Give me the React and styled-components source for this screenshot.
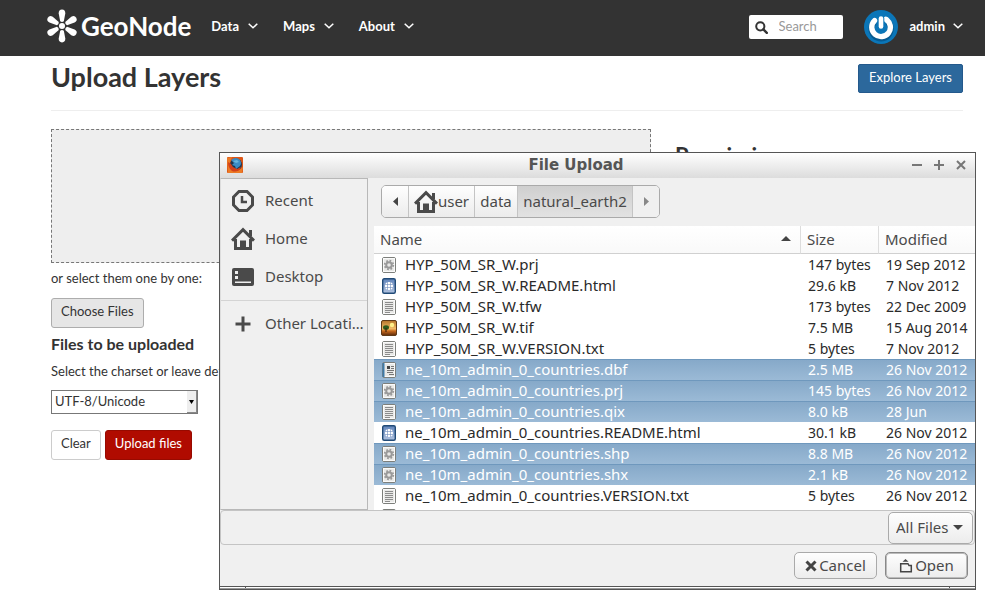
import React, { useState } from 'react'
import styled, { createGlobalStyle } from 'styled-components'


const FILES = [
  { name: 'HYP_50M_SR_W.prj', icon: 'gear', size: '147 bytes', modified: '19 Sep 2012' },
  { name: 'HYP_50M_SR_W.README.html', icon: 'web', size: '29.6 kB', modified: '7 Nov 2012' },
  { name: 'HYP_50M_SR_W.tfw', icon: 'text', size: '173 bytes', modified: '22 Dec 2009' },
  { name: 'HYP_50M_SR_W.tif', icon: 'image', size: '7.5 MB', modified: '15 Aug 2014' },
  { name: 'HYP_50M_SR_W.VERSION.txt', icon: 'text', size: '5 bytes', modified: '7 Nov 2012' },
  { name: 'ne_10m_admin_0_countries.dbf', icon: 'book', size: '2.5 MB', modified: '26 Nov 2012', picked: true },
  { name: 'ne_10m_admin_0_countries.prj', icon: 'gear', size: '145 bytes', modified: '26 Nov 2012', picked: true },
  { name: 'ne_10m_admin_0_countries.qix', icon: 'text', size: '8.0 kB', modified: '28 Jun', picked: true },
  { name: 'ne_10m_admin_0_countries.README.html', icon: 'web', size: '30.1 kB', modified: '26 Nov 2012' },
  { name: 'ne_10m_admin_0_countries.shp', icon: 'gear', size: '8.8 MB', modified: '26 Nov 2012', picked: true },
  { name: 'ne_10m_admin_0_countries.shx', icon: 'gear', size: '2.1 kB', modified: '26 Nov 2012', picked: true },
  { name: 'ne_10m_admin_0_countries.VERSION.txt', icon: 'text', size: '5 bytes', modified: '26 Nov 2012' },
  { name: '', icon: 'book', size: '', modified: '' },
]

/* icons */

const Logo = () => (
  <svg width="32" height="34" viewBox="-16 -17 32 34" fill="#fff">
    <circle r="3" />
    {[0, 60, 120, 180, 240, 300].map((a) => (
      <path key={a} transform={`rotate(${a})`} d="M-1.8 -4.8 L-3.3 -12.6 Q-3.4 -16.4 0 -16.4 Q3.4 -16.4 3.3 -12.6 L1.8 -4.8 Q0 -3.4 -1.8 -4.8 Z" />
    ))}
  </svg>
)

const Chevron = () => (
  <svg width="10" height="6" viewBox="0 0 10 6" fill="none" stroke="#fff" strokeWidth="1.5">
    <path d="M0.7 0.7 L5 4.8 L9.3 0.7" />
  </svg>
)

const SearchIcon = () => (
  <svg width="13" height="13" viewBox="0 0 13 13" fill="none" stroke="#333">
    <circle cx="5.3" cy="5.3" r="4.1" strokeWidth="2" />
    <path d="M8.4 8.4 L11.8 11.8" strokeWidth="2.4" strokeLinecap="round" />
  </svg>
)

const Avatar = () => (
  <svg width="34" height="34" viewBox="0 0 34 34" fill="none">
    <circle cx="17" cy="17" r="17" fill="#0b76b8" />
    <path d="M10.6 10.8 A9.6 9.6 0 1 0 23.6 10.8" stroke="#075a90" strokeWidth="6" transform="translate(0 1)" />
    <path d="M10.6 10.6 A9.3 9.3 0 1 0 22 9.4" stroke="#fff" strokeWidth="5.4" strokeLinecap="round" />
    <path d="M17 8 V17.5" stroke="#0b76b8" strokeWidth="6.6" />
    <path d="M17 8.5 V16.5" stroke="#fff" strokeWidth="4.6" strokeLinecap="round" />
  </svg>
)

const Firefox = () => (
  <svg width="16" height="16" viewBox="0 0 16 16">
    <rect width="16" height="16" rx="1" fill="#dc5516" />
    <path d="M0 1 L5 0 L2 8 L5 13 L11 14 L16 10 L15 16 L1 16 Z" fill="#ec7a25" />
    <circle cx="9" cy="7.5" r="6" fill="#20364f" />
    <path d="M4 3 Q9 -1 13 3 Q15 6 13 9 L9 12 L8 9 L5 8 L7 6 Z" fill="#3b8cc4" />
    <path d="M1 5 L4 7 L6 10 L10 12 L14 10 Q11 16 5 14 Q1 11 1 5 Z" fill="#d2401a" />
    <path d="M6 4 L10 3 L12 5 L9 6 Z" fill="#69b5dd" />
  </svg>
)

const HomeIcon = () => (
  <svg width="24" height="24" viewBox="0 0 24 24" fill="none" stroke="#4a4a4a">
    <path d="M1 13.600 L12 2.600 L23 13.600" strokeWidth="3" />
    <path d="M19.500 3 V9" strokeWidth="3" />
    <path d="M4.500 12 V21.500 H19.500 V12" strokeWidth="3" />
    <path d="M12 13.500 V22" strokeWidth="6" />
  </svg>
)

const RecentIcon = () => (
  <svg width="24" height="24" viewBox="0 0 24 24" fill="none" stroke="#4a4a4a" strokeWidth="3">
    <path d="M8 2.500 H16 L21.500 8 V16 L16 21.500 H8 L2.500 16 V8 Z" />
    <path d="M11 7 V13 H16" strokeWidth="2.500" />
  </svg>
)

const DesktopIcon = () => (
  <svg width="24" height="24" viewBox="0 0 24 24">
    <rect x="1" y="3" width="22" height="18" rx="2" fill="#4a4a4a" />
    <path d="M4 6 H7 V9 H4 Z M4 11 H7 V14 H4 Z M4 16.500 H20 V18 H4 Z" fill="#f0f0f0" />
  </svg>
)

const PlusIcon = () => (
  <svg width="24" height="24" viewBox="0 0 24 24" stroke="#4a4a4a" strokeWidth="3">
    <path d="M12 4.500 V19.500 M4.500 12 H19.500" />
  </svg>
)

const Triangle = ({ points, w, h, color = '#444' }) => (
  <svg width={w} height={h} viewBox={`0 0 ${w} ${h}`}>
    <polygon points={points} fill={color} />
  </svg>
)

const FileIcon = ({ kind }) => {
  if (kind === 'image') {
    return (
      <svg width="16" height="16" viewBox="0 0 16 16">
        <defs>
          <linearGradient id="sunset" x1="0" y1="0" x2="0" y2="1">
            <stop offset="0" stopColor="#b4742b" />
            <stop offset="0.55" stopColor="#f3bd68" />
            <stop offset="0.7" stopColor="#c86a1d" />
            <stop offset="1" stopColor="#5a2a0c" />
          </linearGradient>
        </defs>
        <rect x="0.5" y="0.5" width="15" height="15" rx="1.5" fill="url(#sunset)" stroke="#5f3a17" />
        <circle cx="11" cy="5" r="2.2" fill="#fff08a" />
        <ellipse cx="5" cy="7.5" rx="3" ry="2.3" fill="#2f5a1c" />
        <path d="M5 8 V12" stroke="#3c2410" strokeWidth="1.2" />
      </svg>
    )
  }
  if (kind === 'web') {
    return (
      <svg width="16" height="16" viewBox="0 0 16 16" fill="none">
        <defs>
          <linearGradient id="webpage" x1="0" y1="0" x2="0" y2="1">
            <stop offset="0" stopColor="#5f83ba" />
            <stop offset="1" stopColor="#b3c4e0" />
          </linearGradient>
        </defs>
        <rect x="1.700" y="0.700" width="12.600" height="14.600" rx="1.500" fill="url(#webpage)" stroke="#204a77" strokeWidth="1.400" />
        <circle cx="8" cy="8" r="4" fill="#fff" />
        <path d="M4 6.500 H12 M4 9.500 H12 M6.500 4 V12 M9.500 4 V12" stroke="#6e8cbc" strokeWidth="0.6" />
      </svg>
    )
  }
  return (
    <svg width="16" height="16" viewBox="0 0 16 16" fill="none">
      <rect x="1.500" y="0.500" width="13" height="15" rx="1.500" fill="#e9e9e7" stroke="#7d7f7b" />
      <rect x="2.500" y="1.500" width="11" height="13" stroke="#fafafa" />
      {kind === 'text' && <path d="M4 3.500 H12 M4 5.500 H12 M4 7.500 H12 M4 9.500 H12 M4 11.500 H12 M4 13.500 H9" stroke="#8c8c8c" />}
      {kind === 'gear' && (
        <>
          <circle cx="8" cy="8" r="2.800" stroke="#999" strokeWidth="2" />
          <circle cx="8" cy="8" r="4.300" stroke="#999" strokeWidth="1.800" strokeDasharray="1.690 1.690" />
        </>
      )}
      {kind === 'book' && (
        <>
          <path d="M2.500 1 V15" stroke="#3f7aa8" strokeWidth="2" />
          <path d="M6 4 H9 V7 H6 Z" fill="#444" />
          <path d="M10 4.500 H13 M10 6.500 H13 M6 8.500 H13 M6 10.500 H12 M8 12.500 H13" stroke="#777" />
        </>
      )}
    </svg>
  )
}

const OpenIcon = () => (
  <svg width="14" height="14" viewBox="0 0 14 14" fill="none" stroke="#444" strokeWidth="1.500">
    <path d="M1.700 12.700 V4.700 H9 L10 6.500 H12.300 V12.700 Z" />
    <path d="M3.500 2.800 L6.500 0 L9.500 2.800 Z" fill="#444" stroke="none" />
  </svg>
)

const CrossIcon = () => (
  <svg width="12" height="12" viewBox="0 0 12 12" stroke="#444" strokeWidth="3">
    <path d="M1.500 1.500 L10.500 10.500 M10.500 1.500 L1.500 10.500" />
  </svg>
)


function App() {
  const [search, setSearch] = useState('')

  return (
    <Page>
      <GlobalStyle />

      <NavBar>
        <Brand href="#"><Logo />GeoNode</Brand>
        <Menu>
          <MenuLink href="#">Data <Chevron /></MenuLink>
          <MenuLink href="#">Maps <Chevron /></MenuLink>
          <MenuLink href="#">About <Chevron /></MenuLink>
        </Menu>
        <SearchBox>
          <SearchIcon />
          <SearchInput aria-label="Search" placeholder="Search" value={search} onChange={(e) => setSearch(e.target.value)} />
        </SearchBox>
        <UserLink href="#"><Avatar /><MenuText>admin <Chevron /></MenuText></UserLink>
      </NavBar>

      <Main>
        <PageHeader>
          <Title>Upload Layers</Title>
          <PrimaryLink href="#">Explore Layers</PrimaryLink>
        </PageHeader>
        <Columns>
          <section>
            <DropZone />
            <Para>or select them one by one:</Para>
            <PageButton $tone="grey" type="button">Choose Files</PageButton>
            <SubTitle>Files to be uploaded</SubTitle>
            <CharsetLabel htmlFor="charset">Select the charset or leave default</CharsetLabel>
            <CharsetBox>
              <CharsetSelect id="charset">
                <option>UTF-8/Unicode</option>
              </CharsetSelect>
              <CharsetArrow><Triangle w={5} h={4} points="0,0 5,0 2.5,4" color="#000" /></CharsetArrow>
            </CharsetBox>
            <ButtonRow>
              <PageButton type="button">Clear</PageButton>
              <PageButton $tone="red" type="button">Upload files</PageButton>
            </ButtonRow>
          </section>
          <SideTitle>Permissions</SideTitle>
        </Columns>
      </Main>

      {/* native file chooser window */}
      <Dialog role="dialog" aria-labelledby="dialog-title">
        <TitleBar>
          <Firefox />
          <DialogTitle id="dialog-title">File Upload</DialogTitle>
          <WindowButton type="button" aria-label="Minimize">
            <svg width="10" height="10" stroke="#777" strokeWidth="2"><path d="M0 5 H10" /></svg>
          </WindowButton>
          <WindowButton type="button" aria-label="Maximize">
            <svg width="10" height="10" stroke="#777" strokeWidth="2"><path d="M0 5 H10 M5 0 V10" /></svg>
          </WindowButton>
          <WindowButton type="button" aria-label="Close">
            <svg width="10" height="10" stroke="#777" strokeWidth="2"><path d="M1 1 L9 9 M9 1 L1 9" /></svg>
          </WindowButton>
        </TitleBar>

        <Body>
          <Places>
            <Place type="button"><RecentIcon /><PlaceName>Recent</PlaceName></Place>
            <Place type="button"><HomeIcon /><PlaceName>Home</PlaceName></Place>
            <Place type="button"><DesktopIcon /><PlaceName>Desktop</PlaceName></Place>
            <Divider />
            <Place type="button"><PlusIcon /><PlaceName>Other Locations</PlaceName></Place>
          </Places>

          <Browser>
            <PathBar>
              <PathButton type="button" $w={26} aria-label="Back"><Triangle w={5} h={9} points="5,0 5,9 0,4.5" /></PathButton>
              <PathButton type="button" $w={66}><HomeIcon /><Lift>user</Lift></PathButton>
              <PathButton type="button" $w={43}><Lift>data</Lift></PathButton>
              <PathButton type="button" $w={115} $active><Lift>natural_earth2</Lift></PathButton>
              <PathButton type="button" $w={27} $flat aria-label="Forward"><Triangle w={5} h={9} points="0,0 0,9 5,4.5" color="#888" /></PathButton>
            </PathBar>
            <FileList>
              <Table>
                <colgroup>
                  <col />
                  <SizeCol />
                  <DateCol />
                </colgroup>
                <thead>
                  <tr>
                    <Th aria-sort="ascending"><SortHead>Name <Triangle w={10} h={5} points="0,5 10,5 5,0" /></SortHead></Th>
                    <Th>Size</Th>
                    <Th>Modified</Th>
                  </tr>
                </thead>
                <tbody>
                  {FILES.map((f, i) => (
                    <Row key={i} $picked={f.picked}>
                      <Td><FileName><FileIcon kind={f.icon} /><Lift>{f.name}</Lift></FileName></Td>
                      <Td>{f.size}</Td>
                      <Td>{f.modified}</Td>
                    </Row>
                  ))}
                </tbody>
              </Table>
            </FileList>
          </Browser>
        </Body>

        <FilterBar>
          <FilterBox>
            <FilterSelect aria-label="File type">
              <option>All Files</option>
            </FilterSelect>
            <FilterArrow><Triangle w={10} h={5} points="0,0 10,0 5,5" /></FilterArrow>
          </FilterBox>
        </FilterBar>
        <Actions>
          <DialogButton type="button"><CrossIcon /><Lift>Cancel</Lift></DialogButton>
          <DialogButton type="button" $default><OpenIcon /><Lift>Open</Lift></DialogButton>
        </Actions>
        <Grip />
      </Dialog>
    </Page>
  )
}

export default App

const GlobalStyle = createGlobalStyle`
* { box-sizing: border-box; }
body {
  margin: 0;
  background: #fff;
  font-family: Lato, sans-serif;
  font-size: 13px;
  line-height: 20px;
  color: #333;
}
button, input, select { font: inherit; color: inherit; margin: 0; }
svg { display: block; flex: none; }
a { text-decoration: none; }
`
const Page = styled.div`
position: relative;
min-height: 100vh;
`
const NavBar = styled.nav`
display: flex;
align-items: center;
height: 56px;
padding: 0 22px 2px 46px;
background: #333;
color: #fff;
`
const Brand = styled.a`
display: flex;
align-items: center;
gap: 3px;
padding-bottom: 2px;
font-size: 26px;
font-weight: 700;
color: #fff;
`
const Menu = styled.div`
display: flex;
flex: 1;
gap: 25px;
margin-left: 20px;
`
const MenuLink = styled.a`
display: flex;
align-items: center;
gap: 9px;
padding-bottom: 3px;
color: #fff;
font-weight: 700;
`
const MenuText = styled.span`
display: flex;
align-items: center;
gap: 8px;
padding-bottom: 3px;
`
const SearchBox = styled.div`
display: flex;
align-items: center;
gap: 11px;
width: 94px;
height: 24px;
padding: 0 6px;
margin-right: 21px;
border-radius: 2px;
background: #fff;
`
const SearchInput = styled.input`
flex: 1;
min-width: 0;
padding: 0 0 3px;
border: 0;
outline: 0;
background: none;
color: #333;
&::placeholder { color: #999; opacity: 1; }
`
const UserLink = styled.a`
display: flex;
align-items: center;
gap: 12px;
color: #fff;
font-weight: 700;
`
const Main = styled.main`
padding: 8px 22px 0 51px;
`
const PageHeader = styled.header`
display: flex;
align-items: flex-start;
justify-content: space-between;
padding-bottom: 17px;
margin-bottom: 18px;
border-bottom: 1px solid #eee;
`
const Title = styled.h1`
margin: 0;
font-size: 27px;
line-height: 26px;
font-weight: 700;
`
const PrimaryLink = styled.a`
padding: 2px 10px 5px;
border: 1px solid #24598c;
border-radius: 2px;
background: #2c689c;
color: #fff;
`
const Columns = styled.div`
display: grid;
grid-template-columns: 25fr 12fr;
column-gap: 24px;
align-items: start;
`
const DropZone = styled.div`
height: 134px;
border: 1px dashed #777;
background: #eee;
`
const Para = styled.p`
margin: 5px 0 10px;
`
const SubTitle = styled.h4`
margin: 5px 0 7px;
font-size: 16px;
line-height: 21px;
`
const SideTitle = styled.h3`
margin: 15px 0 0;
font-size: 22px;
line-height: 24px;
`
const CharsetLabel = styled.label`
display: block;
margin-bottom: 9px;
`
const CharsetBox = styled.div`
position: relative;
width: 147px;
`
const CharsetSelect = styled.select`
display: block;
appearance: none;
width: 100%;
height: 24px;
padding: 0 12px 5px 3px;
border: 1px solid #777;
border-radius: 0;
background: #fff;
`
const CharsetArrow = styled.span`
position: absolute;
top: 1px;
right: 1px;
bottom: 1px;
display: flex;
align-items: center;
justify-content: center;
width: 10px;
border-right: 1px solid #888;
border-bottom: 1px solid #888;
background: #eee;
pointer-events: none;
`
const ButtonRow = styled.div`
display: flex;
gap: 4px;
margin-top: 16px;
`
const tones = {
  grey: 'background: #e6e6e6; border-color: #adadad;',
  red: 'background: #b00b00; border-color: #970a00; color: #fff;',
}
const PageButton = styled.button`
display: block;
height: 30px;
padding: 0 9px 4px;
border: 1px solid #ccc;
border-radius: 3px;
background: #fff;
${(p) => tones[p.$tone]}
`
const Dialog = styled.div`
position: absolute;
top: 152px;
left: 219px;
right: 9px;
border: 1px solid #555;
background: #f0f0f0;
color: #4a4a4a;
font-family: 'Noto Sans', sans-serif;
font-size: 15px;
`
const Lift = styled.span`
padding-bottom: 2px;
`
const TitleBar = styled.div`
display: flex;
align-items: center;
gap: 12px;
height: 25px;
padding: 0 9px 2px 7px;
background: linear-gradient(#fff, #dcdcdc);
`
const DialogTitle = styled.h2`
flex: 1;
margin: 0;
padding-right: 3px;
text-align: center;
font-family: 'DejaVu Sans', sans-serif;
font-size: 15px;
line-height: 20px;
color: #555;
`
const WindowButton = styled.button`
display: block;
padding: 0;
border: 0;
background: none;
`
const Body = styled.div`
display: flex;
`
const Places = styled.div`
width: 148px;
padding-top: 3px;
border: 1px solid #b8b8b8;
border-left-color: #ddd;
`
const Place = styled.button`
display: flex;
align-items: center;
gap: 10px;
width: 100%;
height: 38px;
padding: 0 0 0 10px;
border: 0;
background: none;
text-align: left;
`
const PlaceName = styled.span`
flex: 1;
padding-bottom: 2px;
overflow: hidden;
white-space: nowrap;
text-overflow: ellipsis;
`
const Divider = styled.hr`
height: 1px;
margin: 4px 0;
border: 0;
background: #d4d4d4;
`
const Browser = styled.div`
flex: 1;
min-width: 0;
padding: 7px 0 0 6px;
`
const PathBar = styled.div`
display: flex;
width: max-content;
margin: 0 0 8px 7px;
border: 1px solid #aaa;
border-radius: 5px;
overflow: hidden;
`
const PathButton = styled.button`
display: flex;
align-items: center;
justify-content: center;
width: ${(p) => p.$w}px;
height: 31px;
padding: 0;
border: 0;
border-left: 1px solid #c4c4c4;
background: ${(p) => p.$flat ? '#f0f0f0' : p.$active ? 'linear-gradient(#cfcfcf, #e2e2e2)' : 'linear-gradient(#fefefe, #ececec)'};
&:first-child { border-left: 0; }
`
const FileList = styled.div`
height: 284px;
overflow: hidden;
background: #fff;
`
const Table = styled.table`
width: 100%;
table-layout: fixed;
border-collapse: separate;
border-spacing: 0;
`
const SizeCol = styled.col`
width: 78px;
`
const DateCol = styled.col`
width: 97px;
`
const Th = styled.th`
height: 28px;
padding: 0 6px 2px;
border-bottom: 1px solid #d0d0d0;
background: linear-gradient(#fff, #f9f9f9);
text-align: left;
font-weight: 400;
& + & { border-left: 1px solid #ddd; }
`
const SortHead = styled.span`
display: flex;
align-items: center;
justify-content: space-between;
padding-right: 3px;
`
const Td = styled.td`
height: 21px;
padding: 0 0 0 8px;
font-size: 14px;
white-space: nowrap;
&:first-child {
  padding-left: 7px;
  font-size: 15px;
}
`
const Row = styled.tr`
color: #2a2a2a;
${(p) => p.$picked && `
  color: #fff;
  background: linear-gradient(#6f98bd 1px, #86a9c9 1px, #9bbad6);
`}
`
const FileName = styled.span`
display: flex;
align-items: center;
gap: 8px;
height: 21px;
`
const FilterBar = styled.div`
display: flex;
justify-content: flex-end;
padding: 1px 1px 0;
border: 1px solid #c4c4c4;
border-radius: 4px;
`
const FilterBox = styled.div`
position: relative;
`
const FilterSelect = styled.select`
display: block;
appearance: none;
width: 85px;
height: 32px;
padding: 0 20px 2px 7px;
border: 1px solid #aaa;
border-radius: 5px;
background: linear-gradient(#fefefe, #ececec);
`
const FilterArrow = styled.span`
position: absolute;
top: 13px;
right: 10px;
pointer-events: none;
`
const Actions = styled.div`
display: flex;
justify-content: flex-end;
gap: 8px;
padding: 7px 7px;
`
const DialogButton = styled.button`
display: flex;
align-items: center;
justify-content: center;
gap: 2px;
width: 83px;
height: 27px;
padding: 0;
border: 1px solid ${(p) => p.$default ? '#888' : '#aaa'};
border-radius: 5px;
background: linear-gradient(#fefefe, #ececec);
box-shadow: ${(p) => p.$default ? 'inset 0 0 0 1px #bbb' : 'none'};
`
const Grip = styled.div`
display: flex;
justify-content: space-between;
height: 3px;
padding: 0 25px;
border-top: 1px solid #555;
border-bottom: 1px solid #999;
background: #fff;
&::before, &::after {
  content: '';
  width: 1px;
  background: #555;
}
`
